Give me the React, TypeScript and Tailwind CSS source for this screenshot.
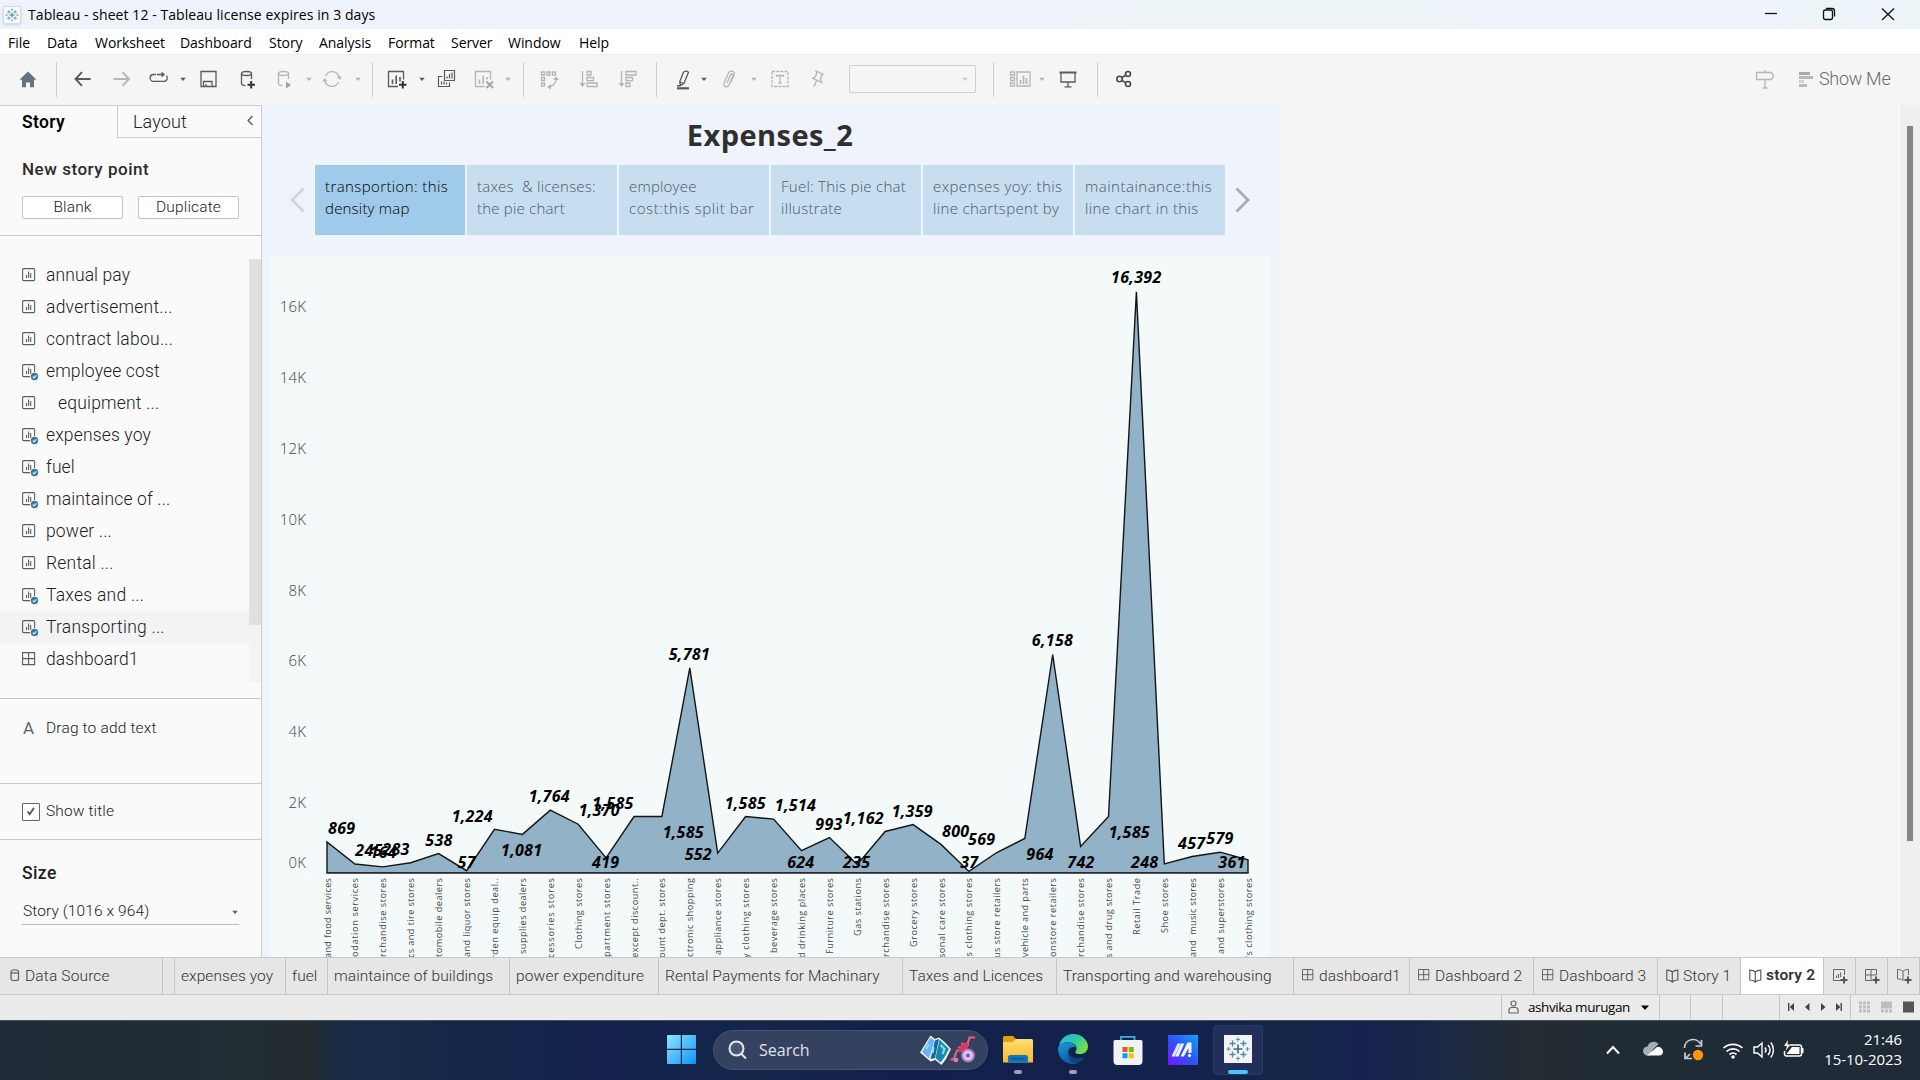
import React from "react";

const DARK = "#5a5a5a";
const DIM = "#b5b5b5";

function Icon({ c = DARK, sw = 1.3, children }: { c?: string; sw?: number; children: React.ReactNode }) {
  return (
    <svg className="block shrink-0" width="24" height="24" viewBox="0 0 24 24" fill="none" stroke={c} strokeWidth={sw}>
      {children}
    </svg>
  );
}

function Caret({ c = DARK, cls }: { c?: string; cls: string }) {
  return (
    <svg className={`block shrink-0 ${cls}`} width="8" height="8" viewBox="0 0 8 8">
      <path d="M1.2 2.8h5.600L4 6z" fill={c} />
    </svg>
  );
}

const Sep = ({ cls }: { cls: string }) => <div className={`h-[35px] w-px shrink-0 bg-[#cfcfcf] ${cls}`} />;

function TableauMark({ size, bg }: { size: number; bg: string }) {
  const plus = (x: number, y: number, r: number, c: string, w: number) => (
    <path key={`${x}-${y}`} d={`M${x - r} ${y}h${2 * r}M${x} ${y - r}v${2 * r}`} stroke={c} strokeWidth={w} />
  );
  return (
    <svg width={size} height={size} viewBox="0 0 28 28" className="block shrink-0">
      <rect width="28" height="28" fill={bg} />
      {plus(14, 14, 4.5, "#2f6f95", 1.6)}
      {plus(8.5, 8.5, 3, "#4c88aa", 1.3)}
      {plus(19.5, 8.5, 3, "#4c88aa", 1.3)}
      {plus(8.5, 19.5, 3, "#4c88aa", 1.3)}
      {plus(19.5, 19.5, 3, "#4c88aa", 1.3)}
      {plus(14, 4.5, 2, "#5f93b3", 1.1)}
      {plus(14, 23.5, 2, "#5f93b3", 1.1)}
      {plus(4.5, 14, 2, "#5f93b3", 1.1)}
      {plus(23.5, 14, 2, "#5f93b3", 1.1)}
    </svg>
  );
}

function TitleBar() {
  return (
    <div className="flex h-[29px] shrink-0 items-center bg-[linear-gradient(90deg,#eef3fb_0%,#eff3fc_54%,#edf4f8_60%,#edf4f8_74%,#eff3fc_78%,#eff3fc_92%,#ebf5f7_95%,#eff3fc_98%,#ebf5f7_100%)]">
      <div className="ml-[3px] border border-[#d5dce4] shadow-sm">
        <TableauMark size={16} bg="#f6f8fa" />
      </div>
      <div className="ml-[7px] w-[1732px] whitespace-nowrap font-['Open_Sans'] text-[14px] tracking-[0.07px] text-black">
        Tableau - sheet 12 - Tableau license expires in 3 days
      </div>
      <svg width="140" height="29" viewBox="1760 0 140 29" fill="none" stroke="#111" strokeWidth="1.300">
        <path d="M1765 13.500h12" />
        <path d="M1823.500 12a2 2 0 0 1 2-2h5a2 2 0 0 1 2 2v5.500a2 2 0 0 1-2 2h-5a2 2 0 0 1-2-2z" />
        <path d="M1826 8.500h6a2.500 2.500 0 0 1 2.500 2.500v5.500" />
        <path d="M1882 8.500l12 11.500M1894 8.500l-12 11.500" />
      </svg>
    </div>
  );
}

const MENU: [string, string][] = [
  ["File", "w-[39px]"],
  ["Data", "w-[48px]"],
  ["Worksheet", "w-[85px]"],
  ["Dashboard", "w-[89px]"],
  ["Story", "w-[50px]"],
  ["Analysis", "w-[69px]"],
  ["Format", "w-[63px]"],
  ["Server", "w-[57px]"],
  ["Window", "w-[71px]"],
  ["Help", "w-[60px]"],
];

function MenuBar() {
  return (
    <div className="flex h-[25px] shrink-0 items-center bg-white pl-[8px] pt-[2px] font-['Open_Sans'] text-[14px] tracking-[-0.05px] text-black">
      {MENU.map(([t, w]) => (
        <div key={t} className={`${w} whitespace-nowrap`}>{t}</div>
      ))}
    </div>
  );
}

function Toolbar() {
  return (
    <div className="flex h-[51px] shrink-0 items-center border-t border-[#ececec] bg-[#f5f5f5] pb-[2px]">
      <div className="ml-[16px]">
        <Icon c="none"><path d="M12 4.500L3.500 12.800H6v7.400h4v-4.700h4v4.700h4v-7.400h2.500z" fill="#66717f" /></Icon>
      </div>
      <Sep cls="ml-[16px]" />
      <div className="ml-[13px]"><Icon sw={1.9}><path d="M20.500 12H5.500M12 5.200L5.500 12l6.500 6.800" /></Icon></div>
      <div className="ml-[16px]"><Icon c={DIM} sw={1.9}><path d="M3.500 12h15M12.500 5.200L19 12l-6.500 6.800" /></Icon></div>
      <div className="ml-[13px]">
        <Icon><path d="M9 7.500H6.500a3.300 3.300 0 0 0 0 6.800H17a3.300 3.300 0 0 0 2.500-5.500M10 7.500h6" /><path d="M14.500 4.500v6l3.500-3z" fill={DARK} stroke="none" /></Icon>
      </div>
      <Caret cls="ml-[8px]" />
      <div className="ml-[9px]">
        <Icon><path d="M5 4.500h15v15H5z" /><path d="M7.500 19.500v-5h8.500v5M10 17v2.500" /></Icon>
      </div>
      <div className="ml-[16px]">
        <Icon><ellipse cx="10.500" cy="6.500" rx="5" ry="2" /><path d="M5.500 6.500v10c0 1.200 1.500 2 4 2.200M15.500 6.500v5.500" /><path d="M15.200 14v7.500M11.500 17.700h7.500" stroke="#333" strokeWidth="2" /></Icon>
      </div>
      <div className="ml-[13px]">
        <Icon c={DIM}><ellipse cx="10.500" cy="6.500" rx="5" ry="2" /><path d="M5.500 6.500v10c0 1.200 1.500 2 4 2.200M15.500 6.500v5.500" /><path d="M13 14.500v7l5-3.500z" fill="#a0a0a0" stroke="none" /></Icon>
      </div>
      <Caret c={DIM} cls="ml-[8px]" />
      <div className="ml-[7px]">
        <Icon c={DIM}><path d="M5.500 9A7.300 7.300 0 0 1 19 9.500M18.500 15A7.300 7.300 0 0 1 5 14.500" /><path d="M16.500 9.500h5l-1.500 3.500zM7.500 14.500h-5L4.500 11z" fill={DIM} stroke="none" /></Icon>
      </div>
      <Caret c={DIM} cls="ml-[10px]" />
      <Sep cls="ml-[10px]" />
      <div className="ml-[12px]">
        <Icon><path d="M13 19.500H3.500v-15h15v8" /><path d="M7.500 17v-4.500M11.200 17V8.500M15 14.500V10" strokeWidth="1.600" /><path d="M17.800 14v7.500M14 17.700h7.500" stroke="#333" strokeWidth="2" /></Icon>
      </div>
      <Caret cls="ml-[9px]" />
      <div className="ml-[8px]">
        <Icon sw={1.2}><path d="M10.500 3.500h10v10h-10zM13 11.500V9.500M15.500 11.500V7M18 11.500V5.500M8.500 9.500h-4v10h11v-4M7.500 17.500v-3M10 17.500v-3M12.500 17.500v-2" /></Icon>
      </div>
      <div className="ml-[14px]">
        <Icon c={DIM}><path d="M12.500 19.500H3.500v-15h15v8" /><path d="M7.500 17v-4.500M11.200 17V8.500M15 12.500V10" strokeWidth="1.600" /><path d="M14.500 14.500l6.500 6.500M21 14.500L14.500 21" stroke="#a6a6a6" strokeWidth="2" /></Icon>
      </div>
      <Caret c={DIM} cls="ml-[8px]" />
      <Sep cls="ml-[11px]" />
      <div className="ml-[13px]">
        <Icon c={DIM}><path d="M4.500 5h3v3h-3zM10 5h3v3h-3zM15.500 5h3v3h-3zM4.500 10.500h3v3h-3zM4.500 16h3v3h-3zM19 12c0 4-3 7-8 8" /><path d="M16 13l3-3.500 3 3.500zM14 17.500l-4 2.500 4 2.500z" fill={DIM} stroke="none" /></Icon>
      </div>
      <div className="ml-[16px]">
        <Icon c={DIM}><path d="M5.500 4v14M10 4.500h4v3.500h-4zM10 10.500h6.500v3.200H10zM10 16h10v3.500H10z" /><path d="M2.500 16h6l-3 4z" fill={DIM} stroke="none" /></Icon>
      </div>
      <div className="ml-[15px]">
        <Icon c={DIM}><path d="M5.500 4v14M10 16h4v3.500h-4zM10 10.500h6.500v3.200H10zM10 4.500h10v3.500H10z" /><path d="M2.500 16h6l-3 4z" fill={DIM} stroke="none" /></Icon>
      </div>
      <Sep cls="ml-[16px]" />
      <div className="ml-[14px]">
        <Icon><path d="M12.500 5l3-1 2 1.200-4.500 11-3.500 2.300-.8-3.800zM9 15l4 1.500M9 18.500l-3 .5" /><path d="M6 21.300h12" strokeWidth="2.200" /></Icon>
      </div>
      <Caret cls="ml-[5px]" />
      <div className="ml-[9px]">
        <Icon c={DIM}><path d="M10 16l3.500-8c.8-1.800 3.200-.8 2.500 1l-4 9c-1.500 3.300-6.500 1.500-5-2l4.500-10c1.500-3.300 7-2 5.500 2l-3.500 8" /></Icon>
      </div>
      <Caret c={DIM} cls="ml-[9px]" />
      <div className="ml-[10px]">
        <Icon c={DIM}><path d="M4 4.500h16v15H4z" strokeDasharray="3 1.200" /><path d="M8.500 10V8.500h7V10M12 8.500v7.500M10.500 16h3" /></Icon>
      </div>
      <div className="ml-[13px]">
        <Icon c={DIM}><path d="M11 4l7 3.200-1.300 1-1.200 4 1.200 3.300-9-4.200 2.600-1.200 1.500-4zM11.500 13.800l-2.500 6" /></Icon>
      </div>
      <div className="ml-[20px] flex h-[28px] w-[127px] items-center justify-end rounded-[2px] border border-[#cfcfcf] pr-[6px]">
        <Caret c="#cacaca" cls="" />
      </div>
      <Sep cls="ml-[17px]" />
      <div className="ml-[14px]">
        <Icon c={DIM}><path d="M2.500 5h4v3h-4zM2.500 10.500h4v3h-4zM2.500 16h4v3h-4zM9 5h13v14H9z" /><path d="M12.500 17v-4M15.500 17V8.500M18.500 17v-6" strokeWidth="1.700" /></Icon>
      </div>
      <Caret c={DIM} cls="ml-[6px]" />
      <div className="ml-[10px]">
        <Icon><path d="M3.500 5.500h17" strokeWidth="2" /><path d="M5 6v9h14V6M12 15v4.500M8.500 19.800h7" /></Icon>
      </div>
      <Sep cls="ml-[17px]" />
      <div className="ml-[14px]">
        <Icon c="#4a4a4a" sw={1.6}><circle cx="7.500" cy="12" r="2.700" /><circle cx="16" cy="7" r="2.500" /><circle cx="16" cy="17" r="2.500" /><path d="M9.800 10.600l4-2.300M9.800 13.400l4 2.300" /></Icon>
      </div>
      <div className="ml-[617px]">
        <Icon c={DIM}><path d="M12 3v2.500M12 12.500v8.500M9.500 21h5M3.500 5.500h15l2 3.500-2 3.500h-15z" /></Icon>
      </div>
      <svg className="ml-[22px]" width="14" height="17" viewBox="0 0 14 17" fill="#b9b9b9">
        <path d="M0 1h11v3H0z" fill="#a8a8a8" /><path d="M0 5h14v3H0z" /><path d="M0 9h5v3H0z" fill="#d0d0d0" /><path d="M0 13h8v3H0z" />
      </svg>
      <div className="ml-[6px] whitespace-nowrap pb-[1px] font-['Roboto'] text-[18px] font-light tracking-[-0.3px] text-[#6a6a6a]">Show Me</div>
    </div>
  );
}

function SheetIcon({ used }: { used?: boolean }) {
  return (
    <svg width="18" height="18" viewBox="0 0 18 18" fill="none" stroke="#5c5c5c" strokeWidth="1.100" className="block shrink-0">
      <rect x="0.600" y="0.600" width="12" height="12" rx="1" />
      <path d="M4.500 10V7M6.600 10V3.500M8.700 10V5" />
      {used && (
        <g stroke="none">
          <circle cx="12.500" cy="12.500" r="4.500" fill="#fafafa" />
          <circle cx="12.500" cy="12.500" r="3.700" fill="#2f7c9c" />
          <path d="M10.800 12.600l1.300 1.300 2.200-2.600" stroke="#fff" />
        </g>
      )}
    </svg>
  );
}

function GridIcon({ size = 14 }: { size?: number }) {
  return (
    <svg width={size} height={size} viewBox="0 0 14 14" fill="none" stroke="#5c5c5c" strokeWidth="1.100" className="block shrink-0">
      <path d="M.6.600h12v12H.6zM6.600.600v12M.6 6.600h12" />
    </svg>
  );
}

const SHEETS: [string, boolean, string][] = [
  ["annual pay", false, "tracking-[0.1px]"],
  ["advertisement...", false, "tracking-[0.25px]"],
  ["contract labou...", false, "tracking-[0.25px]"],
  ["employee cost", true, "tracking-[0.15px]"],
  ["equipment ...", false, "tracking-[0.2px] pl-[12px]"],
  ["expenses yoy", true, "tracking-[0.15px]"],
  ["fuel", true, "tracking-[0.1px]"],
  ["maintaince of ...", true, "tracking-[0.15px]"],
  ["power ...", false, "tracking-[0.15px]"],
  ["Rental ...", false, "tracking-[0.2px]"],
  ["Taxes and ...", true, "tracking-[0.25px]"],
  ["Transporting ...", true, "tracking-[0.25px]"],
];

function Sidebar() {
  return (
    <div className="flex w-[262px] shrink-0 flex-col border-r border-[#cdcdcd] bg-[#fafafa] font-['Roboto'] text-[#222]">
      <div className="flex h-[33px] shrink-0 border-t border-[#cdcdcd]">
        <div className="flex w-[117px] items-center pl-[22px] text-[17.500px] font-semibold tracking-[0.3px] text-black">Story</div>
        <div className="flex flex-1 items-center justify-between border-b border-l border-[#cdcdcd] pl-[15px] pr-[7px]">
          <span className="text-[18px] font-light tracking-[0.1px]">Layout</span>
          <svg className="mb-[2px]" width="7" height="11" viewBox="0 0 7 11" fill="none" stroke="#555" strokeWidth="1.300"><path d="M5.500 1L1.200 5.500l4.300 4.500" /></svg>
        </div>
      </div>
      <div className="h-[98px] shrink-0 border-b border-[#c9c9c9] pl-[22px] pt-[20px]">
        <div className="h-[24px] text-[17px] font-medium leading-[23px] tracking-[0.53px] text-[#2b2b2b]">New story point</div>
        <div className="mt-[14px] flex gap-[15px] text-[15.500px] font-light">
          <div className="flex h-[23px] w-[101px] items-center justify-center rounded-[2px] border border-[#c4c4c4] bg-white pt-[1px] tracking-[0.15px]">Blank</div>
          <div className="flex h-[23px] w-[101px] items-center justify-center rounded-[2px] border border-[#c4c4c4] bg-white pt-[1px] tracking-[0.15px]">Duplicate</div>
        </div>
      </div>
      <div className="flex h-[463px] shrink-0 border-b border-[#c9c9c9] pt-[23px]">
        <div className="w-[249px]">
          {SHEETS.map(([t, used, cls]) => (
            <div key={t} className={`flex h-[32px] items-center pl-[22px] ${t === "Transporting ..." ? "bg-[#f3f3f3]" : ""}`}>
              <div className="w-[24px] pt-[3px]"><SheetIcon used={used} /></div>
              <div className={`whitespace-nowrap text-[17.500px] font-light ${cls}`}>{t}</div>
            </div>
          ))}
          <div className="flex h-[32px] items-center pl-[22px]">
            <div className="w-[24px]"><GridIcon /></div>
            <div className="text-[17.500px] font-light tracking-[0.1px]">dashboard1</div>
          </div>
        </div>
        <div className="h-[423px] w-[12px] bg-[#f3f3f3]"><div className="h-[366px] bg-[#e0e0e0]" /></div>
      </div>
      <div className="flex h-[85px] shrink-0 border-b border-[#c9c9c9] pl-[22px] pt-[18px] text-[15.500px] leading-[22px]">
        <div className="w-[24px] pl-[1px] text-[17px] text-[#666]">A</div>
        <div className="font-light tracking-[0.17px]">Drag to add text</div>
      </div>
      <div className="flex h-[56px] shrink-0 items-center border-b border-[#c9c9c9] pl-[22px] text-[15.500px]">
        <div className="flex h-[18px] w-[18px] items-center justify-center rounded-[1px] border border-[#666] bg-white">
          <svg width="10" height="10" viewBox="0 0 10 10" fill="none" stroke="#555" strokeWidth="1.800"><path d="M1.500 4.500l2.200 2.700L8 .8" /></svg>
        </div>
        <div className="pl-[6px] pt-[1px] font-light tracking-[0.12px]">Show title</div>
      </div>
      <div className="flex flex-1 flex-col pl-[22px] pt-[21px]">
        <div className="h-[24px] text-[17.500px] font-medium leading-[24px] tracking-[0.4px]">Size</div>
        <div className="mt-[15px] flex h-[25px] w-[217px] items-center justify-between border-b border-[#bdbdbd] pl-[1px] text-[15.500px] font-light">
          <span className="tracking-[0.1px]">Story (1016 x 964)</span>
          <Caret cls="" />
        </div>
      </div>
    </div>
  );
}

const POINTS: [string, string, string, string][] = [
  ["transportion: this", "tracking-[0.4px]", "density map", "tracking-[0.2px]"],
  ["taxes  & licenses:", "tracking-[0.22px]", "the pie chart", "tracking-[0.2px]"],
  ["employee", "tracking-[0.2px]", "cost:this split bar", "tracking-[0.6px]"],
  ["Fuel: This pie chat", "tracking-[0.27px]", "illustrate", "tracking-[0.3px]"],
  ["expenses yoy: this", "tracking-[0.4px]", "line chartspent by", "tracking-[0.33px]"],
  ["maintainance:this", "tracking-[0.5px]", "line chart in this", "tracking-[0.38px]"],
];

/* value, label, label centre x, label centre y, category text, category length */
const DATA: [number, string, number, number, string, number][] = [
  [869, "869", 341.7, 827.7, "and food services", 80],
  [245, "245", 369, 850, "odation services", 79],
  [164, "164", 383.3, 852.3, "rchandise stores", 79],
  [283, "283", 396, 849, "cs and tire stores", 80],
  [538, "538", 439, 840, "tomobile dealers", 79],
  [57, "57", 466.7, 861.7, "and liquor stores", 79],
  [1224, "1,224", 472.3, 816, "rden equip deal..", 81],
  [1081, "1,081", 521.7, 850, "supplies dealers", 76],
  [1764, "1,764", 549.3, 795.7, "cessories stores", 80],
  [1370, "1,370", 599.3, 810, "Clothing stores", 71],
  [419, "419", 605.7, 861.7, "partment stores", 79],
  [1585, "1,585", 613, 802.7, "except discount..", 80],
  [1585, "1,585", 683.3, 832, "ount dept. stores", 80],
  [5781, "5,781", 689.4, 654, "ctronic shopping", 79],
  [552, "552", 698.3, 854, "appliance stores", 77],
  [1585, "1,585", 745.3, 802.7, "y clothing stores", 80],
  [1514, "1,514", 795.5, 804.7, "beverage stores", 75],
  [624, "624", 800.8, 861.7, "d drinking places", 80],
  [993, "993", 829, 823.7, "Furniture stores", 76],
  [235, "235", 856.7, 861.7, "Gas stations", 58],
  [1162, "1,162", 863.3, 818, "rchandise stores", 79],
  [1359, "1,359", 912.3, 811, "Grocery stores", 69],
  [800, "800", 955.7, 831, "sonal care stores", 80],
  [37, "37", 969.3, 861.7, "'s clothing stores", 81],
  [569, "569", 981.7, 838.7, "us store retailers", 80],
  [964, "964", 1040, 853.7, "vehicle and parts", 79],
  [6158, "6,158", 1052.5, 640.5, "onstore retailers", 79],
  [742, "742", 1081, 861.7, "rchandise stores", 79],
  [1585, "1,585", 1129.3, 832, "s and drug stores", 80],
  [16392, "16,392", 1136.3, 277.5, "Retail Trade", 57],
  [248, "248", 1144.7, 861.7, "Shoe stores", 55],
  [457, "457", 1191.7, 842.7, "and  music stores", 79],
  [579, "579", 1220, 837.7, "and superstores", 76],
  [361, "361", 1232, 861.7, "'s clothing stores", 80],
];

const BASE = 872.7;
const px = (i: number) => 327 + i * 27.91;
const py = (v: number) => BASE - v * 0.03543;
const LINE = DATA.map((d, i) => `${px(i).toFixed(1)},${py(d[0]).toFixed(1)}`).join(" ");

function AreaChart() {
  return (
    <svg width="1000" height="702" viewBox="270 255 1000 702" className="block shrink-0">
      <rect x="270" y="255" width="1000" height="702" fill="#f4fafa" />
      <path d="M313.500 262v612M306 873.500h955" stroke="#f0f5f5" strokeWidth="1" />
      <g fontFamily="Open Sans" fontSize="15" fontWeight="300" fill="#444" textAnchor="end" letterSpacing="0.2">
        {[2, 4, 6, 8, 10, 12, 14, 16].map((k) => (
          <text key={k} x="306.200" y={py(k * 1000) + 6.3}>{k}K</text>
        ))}
        <text x="306.200" y="868.300">0K</text>
      </g>
      <polygon points={`327,${BASE} ${LINE} 1248,${BASE}`} fill="#91b2c7" stroke="#151515" strokeWidth="1.400" />
      <path d={`M326.500 ${BASE}h922`} stroke="#2a2a33" strokeWidth="1.500" />
      <g fontFamily="Open Sans" fontSize="9.200" fill="#4a4a4a">
        {DATA.map((d, i) => (
          <text key={i} transform={`translate(${px(i) + 3.5} 878) rotate(-90)`} textAnchor="end" textLength={d[5]} className="whitespace-pre">
            {d[4]}
          </text>
        ))}
      </g>
      <g fontFamily="Open Sans" fontSize="16" fontWeight="700" fontStyle="italic" fill="#000" textAnchor="middle" letterSpacing="0.300">
        {DATA.map((d, i) => (
          <text key={i} x={d[2]} y={d[3] + 5.9}>{d[1]}</text>
        ))}
      </g>
    </svg>
  );
}

function StoryCanvas() {
  return (
    <div className="flex w-[1016px] shrink-0 flex-col items-center bg-[#eff3fb]">
      <div className="h-[60px] pt-[9px] font-['Open_Sans'] text-[29px] font-bold leading-[42px] tracking-[0.45px] text-[#2f2f2f]">Expenses_2</div>
      <div className="flex h-[70px] w-full items-center">
        <svg className="mb-[1px] ml-[27px]" width="16" height="26" viewBox="0 0 16 26" fill="none" stroke="#cfd3da" strokeWidth="2.600"><path d="M14.500 1.500L3 13l11.500 11.500" /></svg>
        <div className="ml-[10px] flex gap-[2px] font-['Open_Sans'] text-[15px] font-light leading-[22px]">
          {POINTS.map((p, i) => (
            <div key={i} className={`h-[70px] w-[150px] whitespace-pre pl-[10px] pt-[10px] ${i === 0 ? "bg-[#9fcae9] text-black" : "bg-[#c7def1] text-[#4c5863]"}`}>
              <div className={p[1]}>{p[0]}</div>
              <div className={p[3]}>{p[2]}</div>
            </div>
          ))}
        </div>
        <svg className="mb-[1px] ml-[10px]" width="16" height="26" viewBox="0 0 16 26" fill="none" stroke="#a9abb0" strokeWidth="2.600"><path d="M1.500 1.500L13 13 1.500 24.500" /></svg>
      </div>
      <div className="h-[20px] shrink-0" />
      <AreaChart />
    </div>
  );
}

function BookIcon() {
  return (
    <svg width="13" height="14" viewBox="0 0 13 14" fill="none" stroke="#5c5c5c" strokeWidth="1.200" className="block shrink-0">
      <path d="M.8 1.200C3 1.200 5 1.500 6.300 3c1.300-1.500 3.300-1.800 5.500-1.800V11C9.600 11 7.600 11.500 6.300 13 5 11.500 3 11 .8 11zM6.300 3v10" />
    </svg>
  );
}

const Plus = () => <path d="M12 8.500v7M8.500 12h7" stroke="#555" strokeWidth="2" />;

const TABS: [string, string, string][] = [
  ["expenses yoy", "w-[111px] pl-[6px]", ""],
  ["fuel", "w-[42px] pl-[6px]", ""],
  ["maintaince of buildings", "w-[182px] pl-[6px]", ""],
  ["power expenditure", "w-[149px] pl-[6px] tracking-[0.16px]", ""],
  ["Rental Payments for Machinary", "w-[244px] pl-[6px]", ""],
  ["Taxes and Licences", "w-[154px] pl-[6px]", ""],
  ["Transporting and warehousing", "w-[237px] pl-[6px]", ""],
  ["dashboard1", "w-[116px] pl-[8px]", "grid"],
  ["Dashboard 2", "w-[124px] pl-[8px]", "grid"],
  ["Dashboard 3", "w-[124px] pl-[8px]", "grid"],
  ["Story 1", "w-[83px] pl-[8px]", "book"],
  ["story 2", "w-[83px] pl-[8px]", "book"],
];

function SheetTabs() {
  return (
    <div className="flex h-[38px] shrink-0 border-b border-t border-[#c9c9c9] bg-[#e6e6e6] font-['Roboto'] text-[15.500px] font-light tracking-[0.06px] text-[#333]">
      <div className="flex w-[163px] items-center border-r border-[#c6c6c6] pl-[10px]">
        <svg className="mb-[2px]" width="10" height="13" viewBox="0 0 10 13" fill="none" stroke="#5c5c5c" strokeWidth="1.200"><rect x="1" y="1" width="7.500" height="10.500" rx="2" /><path d="M1 4h7.500" /></svg>
        <span className="ml-[5px] pt-[2px] tracking-[0.15px]">Data Source</span>
      </div>
      <div className="w-[12px] border-r border-[#c6c6c6]" />
      {TABS.map(([t, w, icon]) => (
        <div key={t} className={`flex shrink-0 items-center whitespace-nowrap border-r border-[#c6c6c6] ${w} ${t === "story 2" ? "bg-white font-semibold" : ""}`}>
          {icon === "grid" && <div className="mb-[2px] mr-[5px]"><GridIcon size={12} /></div>}
          {icon === "book" && <div className="mr-[4px]"><BookIcon /></div>}
          <span className={t === "story 2" ? "tracking-[0.2px]" : "pt-[2px]"}>{t}</span>
        </div>
      ))}
      <div className="flex w-[32px] items-center justify-center border-r border-[#c6c6c6]">
        <svg width="16" height="16" viewBox="0 0 16 16" fill="none" stroke="#666"><path d="M9 12.500H1.500v-11h11V7M4.500 10V7.500M6.500 10V6M8.500 9V4.500" /><Plus /></svg>
      </div>
      <div className="flex w-[32px] items-center justify-center border-r border-[#c6c6c6]">
        <svg width="16" height="16" viewBox="0 0 16 16" fill="none" stroke="#666"><path d="M8 12.500H1.500v-11h11V7M7 1.500v11M1.500 7h11" /><Plus /></svg>
      </div>
      <div className="flex w-[32px] items-center justify-center border-r border-[#c6c6c6]">
        <svg width="16" height="16" viewBox="0 0 16 16" fill="none" stroke="#666"><path d="M7 12.500C5.500 11 4 11 1.500 11V1.500c2.500 0 4 .5 5.500 2 1.500-1.500 3-2 5.500-2V7M7 3.500v9" /><Plus /></svg>
      </div>
    </div>
  );
}

function StatusBar() {
  return (
    <div className="flex h-[25px] shrink-0 justify-end bg-[#ebebeb]">
      <div className="flex w-[158px] items-center border-l border-[#c6c6c6] pl-[6px]">
        <svg className="mb-[1px]" width="12" height="14" viewBox="0 0 12 14" fill="none" stroke="#666" strokeWidth="1.200"><circle cx="5.500" cy="3.500" r="2.500" /><path d="M1 13v-3c0-1.500 1-2.500 2.500-2.500h4C9 7.500 10 8.500 10 10v3z" /></svg>
        <span className="ml-[8px] w-[112px] whitespace-nowrap font-['Open_Sans'] text-[13.500px] tracking-[-0.42px] text-black">ashvika murugan</span>
        <svg width="10" height="6" viewBox="0 0 10 6"><path d="M1 .5h8L5 5z" /></svg>
      </div>
      <div className="w-[31px] border-l border-[#c6c6c6]" />
      <div className="w-[32px] border-l border-[#c6c6c6]" />
      <div className="w-[57px] border-l border-[#c6c6c6]" />
      <div className="flex w-[71px] items-center border-l border-[#c6c6c6]">
        <svg className="mb-[1px]" width="70" height="24" viewBox="1780 995 70 24" fill="#444">
          <path d="M1788 1003h1.400v8h-1.400zM1794 1003v8l-4.300-4zM1809.500 1003v8l-4.500-4zM1821 1003v8l4.500-4zM1836 1003v8l4.300-4zM1840.500 1003h1.400v8h-1.400z" />
        </svg>
      </div>
      <div className="flex w-[70px] items-center border-l border-[#c6c6c6]">
        <svg className="mb-[1px]" width="69" height="24" viewBox="1851 995 69 24" fill="#bdbdbd">
          {[0, 1, 2].map((r) => [0, 1, 2].map((c) => <rect key={`${r}${c}`} x={1859 + c * 4} y={1001.5 + r * 4} width="3" height="3" />))}
          <path d="M1881 1001.500h11v7h-11zM1881 1009.500h3v3h-3zM1885 1009.500h3v3h-3zM1889 1009.500h3v3h-3z" />
          <rect x="1903" y="1001.500" width="11" height="11" fill="#555" />
        </svg>
      </div>
    </div>
  );
}

function Taskbar() {
  return (
    <div className="flex h-[60px] shrink-0 items-center border-t border-[#4a5258] bg-[linear-gradient(90deg,#1e2b36_0px,#212c33_250px,#232a30_310px,#182b44_345px,#152848_440px,#13214c_600px,#14264a_760px,#12204c_900px,#13224c_1200px,#132647_1290px,#15224f_1360px,#1b2745_1440px,#242b31_1530px,#1f2b35_1640px,#1e2a36_1920px)] pb-[2px]">
      <svg className="ml-[667px]" width="29" height="29" viewBox="0 0 29 29">
        <defs><linearGradient id="win" x1="0" y1="0" x2="29" y2="29" gradientUnits="userSpaceOnUse"><stop offset="0" stopColor="#8fe4ff" /><stop offset="1" stopColor="#0d95f8" /></linearGradient></defs>
        <path d="M1 0h12.800v13.800H0V1a1 1 0 0 1 1-1zM15 0h13a1 1 0 0 1 1 1v12.800H15zM0 15h13.800v14H1a1 1 0 0 1-1-1zM15 15h14v13a1 1 0 0 1-1 1H15z" fill="url(#win)" />
      </svg>
      <div className="ml-[17px] flex h-[40px] w-[275px] items-center rounded-full border border-[#47536f] bg-[#34415f]">
        <svg className="ml-[14px]" width="20" height="20" viewBox="0 0 20 20" fill="none" stroke="#e4e8ee" strokeWidth="2"><circle cx="8.500" cy="8.500" r="7" fill="#4a5773" /><path d="M13.500 14l4.500 4.500" /></svg>
        <span className="ml-[11px] w-[161px] pt-[1px] font-['Open_Sans'] text-[16px] tracking-[0px] text-[#dfe4ea]">Search</span>
        <svg width="56" height="30" viewBox="0 0 56 30">
          <path d="M10.500.5l4.500 3.500 4-1.500 5 4 7 7.500-5 10-4.500 6-6-5-5 1.500L0 17.500z" fill="#eef4f8" />
          <path d="M10.500 2.500l4 3-5.500 18L2 17z" fill="#6db0f5" />
          <path d="M15 5.500l4-1.500-4 19-4.500 1z" fill="#0f6a98" />
          <path d="M19.500 4.500l9.500 9.500-5 9-3.500 4.500-5-4.500z" fill="#1786b3" />
          <path d="M8.500 9l-2 5M13.500 12l-1 6M20.500 10l4 4-2 5" stroke="#86e0d8" strokeWidth="2.200" fill="none" />
          <g fill="none" stroke="#e8607f" strokeWidth="2.200"><path d="M55 2.500h-5.500l-4 13H37l-3.500 9h-3M41 8.500l8 1.500M38 12.500h8" /></g>
          <path d="M42 8.500h6.500l-2.500 8h-8z" fill="#dc3766" />
          <circle cx="48" cy="20.500" r="6" fill="#d9c8f2" stroke="#a678cd" strokeWidth="2" />
          <circle cx="48" cy="20.500" r="2" fill="#8453b3" />
          <circle cx="36" cy="25" r="2.300" fill="#c882cf" />
        </svg>
      </div>
      <div className="ml-[15px] flex h-[58px] w-[30px] flex-col items-center pt-[15px]">
        <svg width="30" height="28" viewBox="0 0 30 28" className="block shrink-0">
          <defs><linearGradient id="fold" x1="0" y1="0" x2="0" y2="1"><stop offset="0" stopColor="#ffdf72" /><stop offset="1" stopColor="#f9b72c" /></linearGradient></defs>
          <path d="M0 1.500A1.500 1.500 0 0 1 1.500 0H10l3 3v6H0z" fill="#e0a00f" />
          <path d="M0 6h9.500L13 3h15.500A1.500 1.500 0 0 1 30 4.500v22H0z" fill="url(#fold)" />
          <path d="M5 26.500v-5A2.500 2.500 0 0 1 7.500 19h15a2.500 2.500 0 0 1 2.500 2.500v5z" fill="#0c75bd" /><path d="M8.500 22.800h13" stroke="#07528b" strokeWidth="1.400" />
        </svg>
        <div className="mt-[6px] h-[4px] w-[8px] shrink-0 rounded-full bg-[#9aa2b5]" />
      </div>
      <div className="ml-[25px] flex h-[58px] w-[30px] flex-col items-center pt-[13px]">
        <svg width="30" height="30" viewBox="0 0 30 30" className="block shrink-0">
          <defs>
            <linearGradient id="eg" x1="0" y1="0" x2="1" y2="0.500"><stop offset="0" stopColor="#2ab4ea" /><stop offset="0.600" stopColor="#33c8a4" /><stop offset="1" stopColor="#74de4c" /></linearGradient>
            <linearGradient id="eb" x1="0" y1="0" x2="0.400" y2="1"><stop offset="0" stopColor="#1c9bdf" /><stop offset="1" stopColor="#0c59a4" /></linearGradient>
          </defs>
          <path d="M1 12C2 5 8 0 15 0c9 0 15 6.500 15 12.500 0 5-4 7.500-8 7.500-4.500 0-5.500-1.500-4.200-3 1.700-2 .7-7.500-5.300-8.500C7 7.600 2.500 10 1 12z" fill="url(#eg)" />
          <path d="M0 15c0-4 5-7 10.500-6.800 4 .1 6.500 2.300 7 5C12 12 9 16 10.500 21c1.200 4.500 5 7.500 8.500 8.400C9 32 0 25 0 15z" fill="url(#eb)" />
          <path d="M11 16c-.5 7 5.500 10.500 15.500 7C24.500 27 20 29.500 17 29.800c-5-1.800-8-8-6-13.800z" fill="#12447c" />
        </svg>
        <div className="mt-[6px] h-[4px] w-[8px] shrink-0 rounded-full bg-[#9aa2b5]" />
      </div>
      <svg className="ml-[25px]" width="30" height="30" viewBox="0 0 30 30">
        <path d="M8 6.500V1.800h13.500v4.700" fill="none" stroke="#2bb4ee" strokeWidth="1.800" />
        <path d="M.5 6.500A1.500 1.500 0 0 1 2 5h26a1.500 1.500 0 0 1 1.500 1.500V26a4 4 0 0 1-4 4h-21a4 4 0 0 1-4-4z" fill="#f0f2f4" />
        <path d="M9.500 12h5v5h-5z" fill="#f1511b" /><path d="M15.700 12h5v5h-5z" fill="#80b800" /><path d="M9.500 18.200h5v5h-5z" fill="#00a2ef" /><path d="M15.700 18.200h5v5h-5z" fill="#fbbc09" />
      </svg>
      <svg className="ml-[25px]" width="30" height="30" viewBox="0 0 30 30">
        <defs><linearGradient id="ma" x1="0" y1="1" x2="1" y2="0"><stop offset="0" stopColor="#7a12ff" /><stop offset="0.500" stopColor="#2f55f4" /><stop offset="1" stopColor="#0aa6ff" /></linearGradient></defs>
        <path d="M0 0h30v30H0z" fill="url(#ma)" />
        <path d="M3.500 21.500L9.500 8.500h3.300l-6 13z" fill="#dfe6ff" />
        <path d="M10 15l3-6.500h3.300L10.500 21.500H7.200z" fill="#fff" opacity="0.900" />
        <path d="M12.500 21.500L19.500 7.500h4v10.500h-3v-5l-4.700 8.500z" fill="#f3f5ff" />
        <circle cx="21.500" cy="20.500" r="1.600" fill="#fff" />
      </svg>
      <div className="ml-[15px] flex h-[50px] w-[50px] flex-col items-center rounded-[4px] border border-[#2b3b5f] bg-[#21305a] pt-[9px]">
        <TableauMark size={28} bg="#f3f3f3" />
        <div className="mt-[7px] h-[4px] w-[20px] shrink-0 rounded-full bg-[#4cc2ff]" />
      </div>
      <svg className="ml-[337px]" width="220" height="40" viewBox="1600 1030 220 40" fill="none" stroke="#fff" strokeWidth="2">
        <path d="M1607 1053.500l6-6.500 6 6.500" />
        <g stroke="none">
          <path d="M1650 1055.500h-2.500a4.500 4.500 0 0 1 0-9 6.500 6.500 0 0 1 11-2.500l-6 6z" fill="#a7adb3" />
          <path d="M1647 1055.500l10-8.500a5 5 0 0 1 6 4c0 3-1.500 4.500-4 4.500z" fill="#fff" />
        </g>
        <path d="M1684.500 1048a8.500 8.500 0 0 1 16-4M1701.500 1040v6h-6M1692 1058.500h-7v-6M1686 1058l4-4" stroke="#c9ced3" strokeWidth="1.700" />
        <circle cx="1698" cy="1055" r="5.200" fill="#fb9707" stroke="none" />
        <path d="M1723.500 1048a14 14 0 0 1 19 0M1726.500 1051.500a9.500 9.500 0 0 1 13 0M1729.500 1054.500a5.300 5.300 0 0 1 7 0" strokeWidth="1.700" /><circle cx="1733" cy="1057" r="1.800" fill="#fff" stroke="none" />
        <path d="M1754 1047h3.500l4.500-4v14l-4.500-4h-3.500z" strokeWidth="1.400" /><path d="M1765 1047.500c1.200 1.500 1.200 3.500 0 5M1768 1045c2.500 3 2.500 7 0 10M1770.800 1042.500c3.500 4.500 3.500 10.500 0 15" strokeWidth="1.400" />
        <path d="M1790 1045h9.500a2 2 0 0 1 2 2v7a2 2 0 0 1-2 2h-13a2 2 0 0 1-2-2v-3" strokeWidth="1.500" /><path d="M1792 1047h7.500v7h-13z" fill="#fff" stroke="none" /><path d="M1802.500 1048v5" /><path d="M1788 1040l-4 6h3l-1.500 5 5-6.500h-3z" fill="#fff" stroke="none" />
      </svg>
      <div className="w-[82px] pb-[1px] text-right font-['Open_Sans'] text-[15px] leading-[20px] tracking-[-0.05px] text-white">
        <div>21:46</div>
        <div>15-10-2023</div>
      </div>
    </div>
  );
}

export default function App() {
  return (
    <div className="flex h-[1080px] w-[1920px] flex-col overflow-hidden bg-[#f5f5f5]">
      <TitleBar />
      <MenuBar />
      <Toolbar />
      <div className="flex h-[852px] shrink-0 overflow-hidden">
        <Sidebar />
        <StoryCanvas />
        <div className="flex-1" />
        <div className="w-[21px] border-l border-white bg-[#efefef] pl-[7px] pt-[21px]">
          <div className="h-[715px] w-[6px] bg-[#858585]" />
        </div>
      </div>
      <SheetTabs />
      <StatusBar />
      <Taskbar />
    </div>
  );
}
